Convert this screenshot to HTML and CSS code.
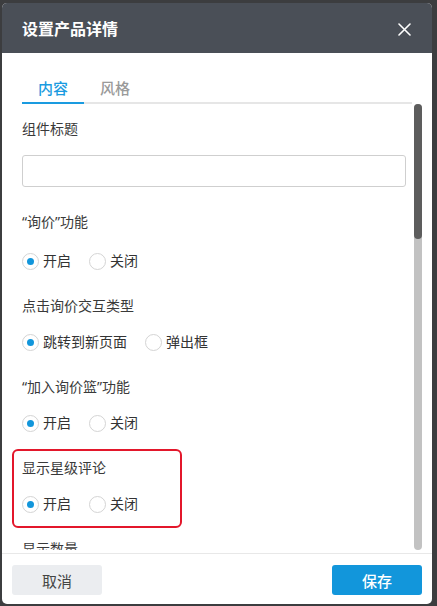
FILE: index.html
```html
<!DOCTYPE html>
<html lang="zh-CN">
<head>
    <meta charset="UTF-8">
    <meta name="viewport" content="width=device-width, initial-scale=1.0">
    <title>设置产品详情</title>
    <link rel="stylesheet" href="styles.css">
</head>
<body>
    <div class="dialog">
        <!-- Header -->
        <div class="dialog-header">
            <h1>设置产品详情</h1>
            <button class="close-btn" aria-label="关闭">
                <svg width="13" height="13" viewBox="0 0 13 13">
                    <path d="M1 1 L12 12 M12 1 L1 12" stroke="#fff" stroke-width="1.6" stroke-linecap="round"/>
                </svg>
            </button>
        </div>

        <!-- Tabs -->
        <div class="tabs">
            <span class="tab active">内容</span>
            <span class="tab">风格</span>
        </div>

        <div class="body-wrap">
            <div class="dialog-body">
                <div class="field">
                    <div class="field-label">组件标题</div>
                    <input class="text-input" type="text">
                </div>

                <div class="field">
                    <div class="field-label first-radio">“询价”功能</div>
                    <div class="radio-group">
                        <label class="radio checked"><span class="dot"></span>开启</label>
                        <label class="radio"><span class="dot"></span>关闭</label>
                    </div>
                </div>

                <div class="field">
                    <div class="field-label">点击询价交互类型</div>
                    <div class="radio-group">
                        <label class="radio checked"><span class="dot"></span>跳转到新页面</label>
                        <label class="radio"><span class="dot"></span>弹出框</label>
                    </div>
                </div>

                <div class="field">
                    <div class="field-label">“加入询价篮”功能</div>
                    <div class="radio-group">
                        <label class="radio checked"><span class="dot"></span>开启</label>
                        <label class="radio"><span class="dot"></span>关闭</label>
                    </div>
                </div>

                <div class="field marked">
                    <div class="field-label">显示星级评论</div>
                    <div class="radio-group">
                        <label class="radio checked"><span class="dot"></span>开启</label>
                        <label class="radio"><span class="dot"></span>关闭</label>
                    </div>
                </div>

                <div class="field">
                    <div class="field-label">显示数量</div>
                    <input class="text-input" type="text">
                </div>
            </div>
            <div class="scrollbar">
                <div class="scroll-thumb"></div>
            </div>
        </div>

        <!-- Footer -->
        <div class="dialog-footer">
            <button class="btn btn-cancel">取消</button>
            <button class="btn btn-save">保存</button>
        </div>
    </div>
</body>
</html>
```

FILE: styles.css
```css
/* Reset */
*, *::before, *::after {
    margin: 0;
    padding: 0;
    box-sizing: border-box;
    font-family: "Noto Sans", "Noto Sans CJK SC", Arial, sans-serif;
}

/* Backdrop */
body {
    width: 437px;
    height: 606px;
    overflow: hidden;
    background-color: #3c3d3f;
    padding: 3px 5px 2px 2px;
}

/* Dialog box */
.dialog {
    display: flex;
    flex-direction: column;
    width: 430px;
    height: 601px;
    background-color: #fff;
    border-radius: 5px;
    overflow: hidden;
}

/* Header */
.dialog-header {
    display: flex;
    align-items: center;
    justify-content: space-between;
    height: 50px;
    padding: 0 21px 0 20px;
    background-color: #4a4f57;
    flex-shrink: 0;
}

.dialog-header h1 {
    color: #fff;
    font-size: 16px;
    font-weight: bold;
    line-height: 20px;
    padding-top: 2px;
}

.close-btn {
    display: flex;
    background: none;
    border: none;
    cursor: pointer;
    padding-top: 2px;
}

/* Tabs */
.tabs {
    display: flex;
    margin: 0 20px;
    padding-top: 25px;
    border-bottom: 2px solid #e6e6e6;
    flex-shrink: 0;
}

.tab {
    font-size: 15px;
    font-weight: 500;
    line-height: 21px;
    color: #9a9a9a;
    padding: 0 16px 3px;
    margin-bottom: -2px;
    border-bottom: 2px solid transparent;
}

.tab.active {
    color: #1a9be0;
    border-bottom-color: #1a9be0;
}

.body-wrap {
    display: flex;
    height: 446px;
    margin-right: 10px;
    flex-shrink: 0;
}

.dialog-body {
    flex: 1;
    overflow: hidden;
    padding: 15px 8px 0 20px;
}

.scrollbar {
    width: 8px;
    background-color: #c2c2c2;
    border-radius: 4px;
}

.scroll-thumb {
    height: 135px;
    background-color: #5d5d5d;
    border-radius: 4px;
}

/* Form fields */
.field {
    margin-bottom: 25px;
}

.field-label {
    font-size: 14px;
    line-height: 20px;
    color: #3a3a3a;
    margin-bottom: 16px;
}

.field-label.first-radio {
    margin-bottom: 19px;
}

.text-input {
    display: block;
    width: 100%;
    height: 32px;
    border: 1px solid #cfcfcf;
    border-radius: 3px;
    padding: 0 10px;
    font-size: 14px;
    outline: none;
}

.radio-group {
    display: flex;
    gap: 18px;
    height: 20px;
    align-items: center;
}

.radio {
    display: flex;
    align-items: center;
    gap: 4px;
    font-size: 14px;
    line-height: 20px;
    color: #333;
    cursor: pointer;
}

.dot {
    display: flex;
    align-items: center;
    justify-content: center;
    width: 17px;
    height: 17px;
    border: 1px solid #d4d4d4;
    border-radius: 50%;
    background-color: #fff;
}

.radio.checked .dot::after {
    content: "";
    width: 7px;
    height: 7px;
    border-radius: 50%;
    background-color: #1296db;
}

/* Highlight box round one field */
.marked {
    position: relative;
}

.marked::after {
    content: "";
    position: absolute;
    left: -10px;
    top: -9px;
    width: 170px;
    height: 79px;
    border: 2px solid #e3172b;
    border-radius: 6px;
}

/* Footer */
.dialog-footer {
    display: flex;
    justify-content: space-between;
    margin-top: 3px;
    padding: 11px 10px 0;
    border-top: 1px solid #e8e8e8;
    flex: 1;
}

.btn {
    width: 90px;
    height: 30px;
    border: none;
    border-radius: 3px;
    font-size: 15px;
    cursor: pointer;
}

.btn-cancel {
    background-color: #ebedf0;
    color: #444;
}

.btn-save {
    background-color: #1296db;
    color: #fff;
    font-weight: 500;
}
```
